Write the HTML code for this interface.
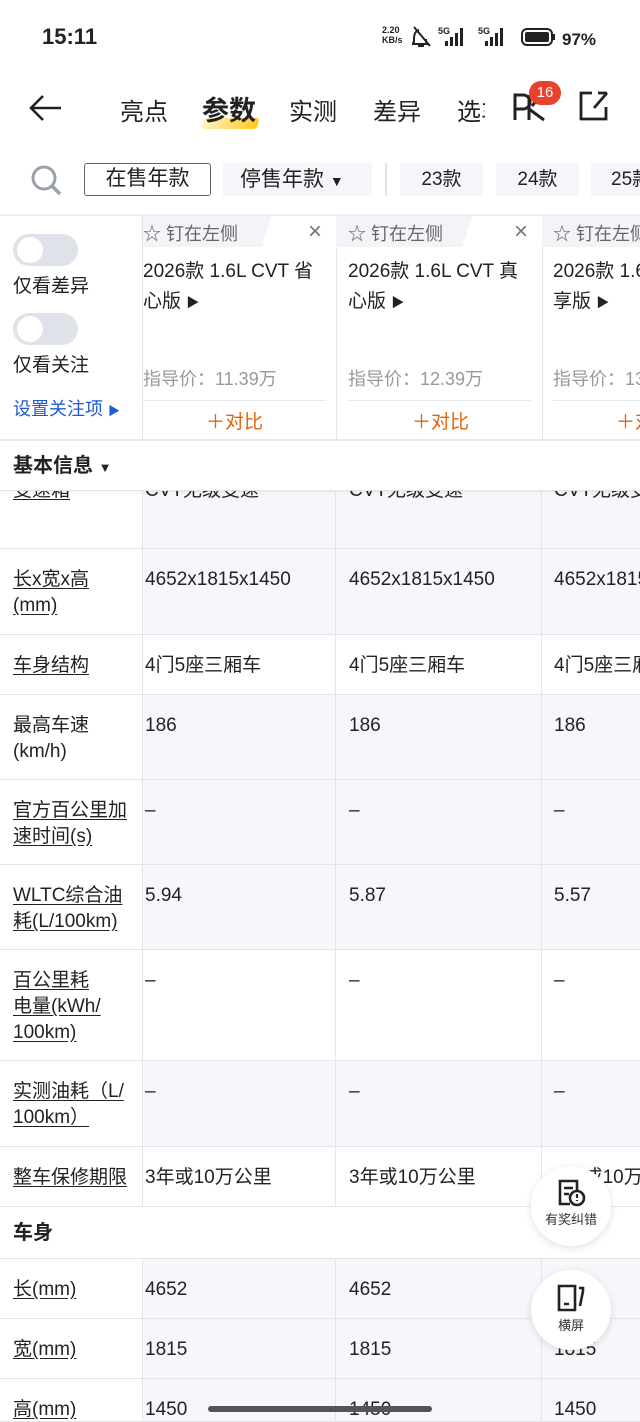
<!DOCTYPE html>
<html><head><meta charset="utf-8"><style>
*{margin:0;padding:0;box-sizing:border-box}
html,body{width:640px;height:1422px;overflow:hidden}
body{background:#fff;font-family:"Liberation Sans","Noto Sans CJK SC",sans-serif;color:#222;position:relative}
.a{position:absolute}
.row{position:absolute;left:0;width:640px;border-bottom:1px solid #e3e5ec;overflow:hidden}
.row .l{position:absolute;left:0;top:0;width:143px;height:100%;background:#fff;border-right:1px solid #e3e5ec;padding:18px 12px 0 13px;font-size:19px;line-height:26px;color:#222}
.row .l u{text-decoration:underline;text-underline-offset:3px}
.row .c{position:absolute;top:0;height:100%;border-right:1px solid #e3e5ec;padding-top:18px;font-size:19px;line-height:26px;color:#222;padding-left:2px;white-space:nowrap;overflow:hidden}
.c1{left:143px;width:193px}.c2{left:336px;width:206px;padding-left:13px!important}.c3{left:542px;width:98px;padding-left:12px!important;border-right:none!important}
.lt .c{background:#f6f7fb}
.dash{color:#999}
.sec{position:absolute;left:0;width:640px;background:#fff;border-bottom:1px solid #e3e5ec;font-size:20px;font-weight:bold;padding-left:13px}
.fab{position:absolute;left:531px;width:80px;height:80px;border-radius:50%;background:#fff;box-shadow:0 2px 8px rgba(0,0,0,.12);text-align:center;font-size:13px;color:#333}
.nw{white-space:nowrap;overflow:hidden}
</style></head><body>
<div class="a" style="left:42px;top:24px;font-size:22px;font-weight:bold;color:#222">15:11</div>
<div class="a" style="left:382px;top:25px;font-size:9px;font-weight:bold;line-height:10px">2.20<br>KB/s</div>
<svg class="a" style="left:412px;top:25px" width="190" height="24" viewBox="0 0 190 24">
<path d="M7 5c-4 1-5 5-5 9v3l-2 2h16l-2-2v-3" fill="none" stroke="#222" stroke-width="2"/><path d="M2 2l16 19" stroke="#222" stroke-width="2"/><path d="M6 21h6" stroke="#222" stroke-width="2"/>
<text x="26" y="9" font-size="9" font-weight="bold" fill="#222" font-family="Liberation Sans">5G</text>
<rect x="33" y="16" width="3" height="5" fill="#222"/><rect x="38" y="12" width="3" height="9" fill="#222"/><rect x="43" y="8" width="3" height="13" fill="#222"/><rect x="48" y="3" width="3" height="18" fill="#222"/>
<text x="66" y="9" font-size="9" font-weight="bold" fill="#222" font-family="Liberation Sans">5G</text>
<rect x="73" y="16" width="3" height="5" fill="#222"/><rect x="78" y="12" width="3" height="9" fill="#222"/><rect x="83" y="8" width="3" height="13" fill="#222"/><rect x="88" y="3" width="3" height="18" fill="#222"/>
<rect x="110" y="4" width="30" height="16" rx="5" fill="none" stroke="#222" stroke-width="2"/><rect x="113" y="7" width="24" height="10" rx="2" fill="#222"/><rect x="141" y="9" width="2" height="6" fill="#222"/>
<text x="150" y="20" font-size="17" font-weight="bold" fill="#222" font-family="Liberation Sans">97%</text>
</svg>
<svg class="a" style="left:28px;top:94px" width="36" height="28"><path d="M3 14h30M15 2L3 14l12 12" fill="none" stroke="#222" stroke-width="2.6"/></svg>
<div class="a" style="left:120px;top:92px;font-size:24px;color:#222">亮点</div>
<div class="a" style="left:202px;top:118px;width:56px;height:11px;background:linear-gradient(90deg,#fff4c8,#ffc81e);border-radius:3px;transform:skewX(-15deg)"></div>
<div class="a" style="left:202px;top:89px;font-size:27px;font-weight:bold;color:#222">参数</div>
<div class="a" style="left:289px;top:92px;font-size:24px;color:#222">实测</div>
<div class="a" style="left:373px;top:92px;font-size:24px;color:#222">差异</div>
<div class="a nw" style="left:457px;top:92px;font-size:24px;color:#222;width:28px">选车</div>
<svg class="a" style="left:512px;top:92px" width="36" height="30"><path d="M3 28V3h8a7 7 0 0 1 0 14H3" fill="none" stroke="#222" stroke-width="3"/><path d="M17 3v25M17 17l15 11M20 14l9-11" fill="none" stroke="#222" stroke-width="3"/></svg>
<div class="a" style="left:529px;top:81px;width:32px;height:24px;border-radius:12px;background:#e8412c;color:#fff;font-size:15px;text-align:center;line-height:24px">16</div>
<svg class="a" style="left:578px;top:90px" width="34" height="32"><path d="M14 3H3v26h25V17" fill="none" stroke="#222" stroke-width="2.8"/><path d="M29 3L16 18" stroke="#222" stroke-width="2.8"/><path d="M20 3h9" stroke="#222" stroke-width="2.8"/></svg>
<svg class="a" style="left:30px;top:164px" width="34" height="34"><circle cx="14" cy="14" r="11" fill="none" stroke="#9aa0ad" stroke-width="3"/><path d="M22 22l8 8" stroke="#9aa0ad" stroke-width="3.5"/></svg>
<div class="a" style="left:84px;top:163px;width:127px;height:33px;border:1.5px solid #666;border-radius:3px;font-size:21px;text-align:center;line-height:30px">在售年款</div>
<div class="a" style="left:223px;top:163px;width:149px;height:33px;background:#f5f6fa;font-size:21px;line-height:33px;padding-left:17px">停售年款 <span style="font-size:14px">▼</span></div>
<div class="a" style="left:385px;top:163px;width:2px;height:33px;background:#e0e2e8"></div>
<div class="a" style="left:400px;top:163px;width:83px;height:33px;background:#f5f6fa;font-size:19px;text-align:center;line-height:33px">23款</div>
<div class="a" style="left:496px;top:163px;width:83px;height:33px;background:#f5f6fa;font-size:19px;text-align:center;line-height:33px">24款</div>
<div class="a nw" style="left:591px;top:163px;width:49px;height:33px;background:#f5f6fa;font-size:19px;line-height:33px;padding-left:20px">25款</div>
<div class="a" style="left:0;top:214px;width:640px;height:2px;background:#eceef3"></div>
<div class="a" style="left:0;top:216px;width:143px;height:224px;border-right:1px solid #e3e5ec"></div>
<div class="a" style="left:13px;top:234px;width:65px;height:32px;border-radius:16px;background:#dfe2e8"><div style="position:absolute;left:4px;top:3px;width:26px;height:26px;border-radius:50%;background:#fff"></div></div>
<div class="a" style="left:13px;top:271px;font-size:19px">仅看差异</div>
<div class="a" style="left:13px;top:313px;width:65px;height:32px;border-radius:16px;background:#dfe2e8"><div style="position:absolute;left:4px;top:3px;width:26px;height:26px;border-radius:50%;background:#fff"></div></div>
<div class="a" style="left:13px;top:350px;font-size:19px">仅看关注</div>
<div class="a" style="left:13px;top:395px;font-size:18px;color:#1f5ad6">设置关注项 <span style="font-size:12px">▶</span></div>
<div class="a" style="left:336px;top:216px;width:1px;height:224px;background:#e3e5ec"></div>
<div class="a" style="left:542px;top:216px;width:1px;height:224px;background:#e3e5ec"></div>
<div class="a" style="left:143px;top:216px;width:128px;height:31px;background:#f3f4f8;clip-path:polygon(0 0,100% 0,93% 100%,0 100%)"></div>
<div class="a" style="left:336px;top:216px;width:136px;height:31px;background:#f3f4f8;clip-path:polygon(0 0,100% 0,93% 100%,0 100%)"></div>
<div class="a" style="left:542px;top:216px;width:98px;height:31px;background:#f3f4f8"></div>
<div class="a" style="left:143px;top:220px;font-size:18px;color:#666">☆ 钉在左侧</div>
<div class="a" style="left:348px;top:220px;font-size:18px;color:#666">☆ 钉在左侧</div>
<div class="a nw" style="left:553px;top:220px;width:87px;font-size:18px;color:#666">☆ 钉在左侧</div>
<div class="a" style="left:308px;top:218px;font-size:24px;color:#777">×</div>
<div class="a" style="left:514px;top:218px;font-size:24px;color:#777">×</div>
<div class="a" style="left:143px;top:257px;width:182px;font-size:19px;line-height:30px">2026款 1.6L CVT 省心版 <span style="font-size:13px">▶</span></div>
<div class="a" style="left:348px;top:257px;width:182px;font-size:19px;line-height:30px">2026款 1.6L CVT 真心版 <span style="font-size:13px">▶</span></div>
<div class="a nw" style="left:553px;top:257px;width:87px;font-size:19px;line-height:30px">2026款 1.6L<br>享版 <span style="font-size:13px">▶</span></div>
<div class="a" style="left:143px;top:365px;font-size:18px;color:#999">指导价：11.39万</div>
<div class="a" style="left:348px;top:365px;font-size:18px;color:#999">指导价：12.39万</div>
<div class="a nw" style="left:553px;top:365px;width:87px;font-size:18px;color:#999">指导价：13.39万</div>
<div class="a" style="left:143px;top:400px;width:183px;height:1px;background:#e6e8ee"></div>
<div class="a" style="left:348px;top:400px;width:183px;height:1px;background:#e6e8ee"></div>
<div class="a" style="left:553px;top:400px;width:87px;height:1px;background:#e6e8ee"></div>
<div class="a" style="left:206px;top:407px;font-size:19px;color:#e0660f">＋对比</div>
<div class="a" style="left:412px;top:407px;font-size:19px;color:#e0660f">＋对比</div>
<div class="a nw" style="left:616px;top:407px;width:24px;font-size:19px;color:#e0660f">＋对比</div>
<div class="a" style="left:0;top:439px;width:640px;height:2px;background:#e6e8ee"></div>
<div class="row lt" style="top:470px;height:79px"><div class="l" style="padding-top:8px"><u>变速箱</u></div><div class="c c1" style="padding-top:8px">CVT无级变速</div><div class="c c2" style="padding-top:8px">CVT无级变速</div><div class="c c3" style="padding-top:8px">CVT无级变速</div></div>
<div class="sec" style="top:441px;height:50px;line-height:50px;box-shadow:0 2px 3px rgba(0,0,0,.05)">基本信息 <span style="font-size:13px;font-weight:normal">▼</span></div>
<div class="row lt" style="top:549px;height:86px"><div class="l"><u>长x宽x高<br>(mm)</u></div><div class="c c1">4652x1815x1450</div><div class="c c2">4652x1815x1450</div><div class="c c3">4652x1815x1450</div></div>
<div class="row" style="top:635px;height:60px"><div class="l"><u>车身结构</u></div><div class="c c1">4门5座三厢车</div><div class="c c2">4门5座三厢车</div><div class="c c3">4门5座三厢车</div></div>
<div class="row lt" style="top:695px;height:85px"><div class="l">最高车速<br>(km/h)</div><div class="c c1">186</div><div class="c c2">186</div><div class="c c3">186</div></div>
<div class="row lt" style="top:780px;height:85px"><div class="l"><u>官方百公里加<br>速时间(s)</u></div><div class="c c1 dash">–</div><div class="c c2 dash">–</div><div class="c c3 dash">–</div></div>
<div class="row lt" style="top:865px;height:85px"><div class="l"><u>WLTC综合油<br>耗(L/100km)</u></div><div class="c c1">5.94</div><div class="c c2">5.87</div><div class="c c3">5.57</div></div>
<div class="row" style="top:950px;height:111px"><div class="l"><u>百公里耗<br>电量(kWh/<br>100km)</u></div><div class="c c1 dash">–</div><div class="c c2 dash">–</div><div class="c c3 dash">–</div></div>
<div class="row lt" style="top:1061px;height:86px"><div class="l"><u>实测油耗（L/<br>100km）</u></div><div class="c c1 dash">–</div><div class="c c2 dash">–</div><div class="c c3 dash">–</div></div>
<div class="row" style="top:1147px;height:60px"><div class="l" style="white-space:nowrap;padding-right:0"><u>整车保修期限</u></div><div class="c c1">3年或10万公里</div><div class="c c2">3年或10万公里</div><div class="c c3">3年或10万公里</div></div>
<div class="sec" style="top:1207px;height:52px;line-height:52px">车身</div>
<div class="row lt" style="top:1259px;height:60px"><div class="l"><u>长(mm)</u></div><div class="c c1">4652</div><div class="c c2">4652</div><div class="c c3">4652</div></div>
<div class="row lt" style="top:1319px;height:60px"><div class="l"><u>宽(mm)</u></div><div class="c c1">1815</div><div class="c c2">1815</div><div class="c c3">1815</div></div>
<div class="row lt" style="top:1379px;height:43px"><div class="l"><u>高(mm)</u></div><div class="c c1">1450</div><div class="c c2">1450</div><div class="c c3">1450</div></div>
<div class="fab" style="top:1166px"><svg style="margin-top:12px" width="34" height="30"><path d="M16 26H6V3h17v9" fill="none" stroke="#222" stroke-width="2.6"/><path d="M10 10h9M10 16h5" stroke="#222" stroke-width="2.6"/><circle cx="23" cy="20" r="7" fill="none" stroke="#222" stroke-width="2.6"/><path d="M23 16v4M23 22v1" stroke="#222" stroke-width="2.2"/></svg><div style="margin-top:-2px">有奖纠错</div></div>
<div class="fab" style="top:1270px"><svg style="margin-top:12px" width="34" height="32"><path d="M5 4h16v24H5z" fill="none" stroke="#222" stroke-width="2.6"/><path d="M10 22h5" stroke="#222" stroke-width="2.4"/><path d="M25 6h4v3l-3 15" fill="none" stroke="#222" stroke-width="2.6"/></svg><div style="margin-top:-2px">横屏</div></div>
<div class="a" style="left:208px;top:1406px;width:224px;height:6px;border-radius:3px;background:#555"></div>
</body></html>
